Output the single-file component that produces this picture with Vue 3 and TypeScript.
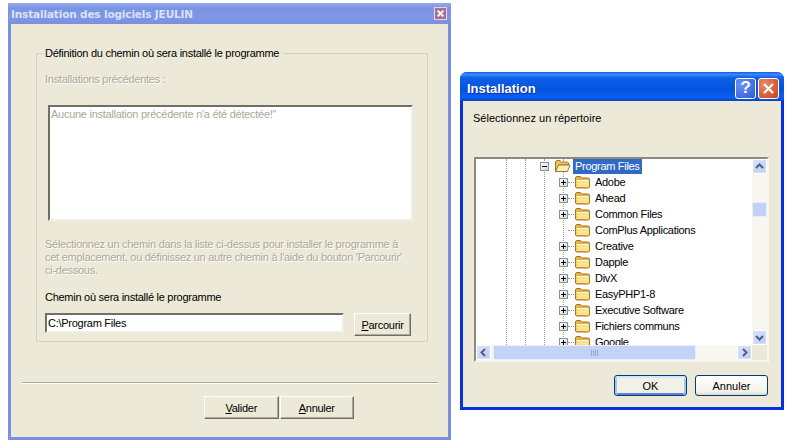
<script setup lang="ts">
interface Row { name: string; plus: boolean }
const rows: Row[] = [
  { name: 'Adobe', plus: true },
  { name: 'Ahead', plus: true },
  { name: 'Common Files', plus: true },
  { name: 'ComPlus Applications', plus: false },
  { name: 'Creative', plus: true },
  { name: 'Dapple', plus: true },
  { name: 'DivX', plus: true },
  { name: 'EasyPHP1-8', plus: true },
  { name: 'Executive Software', plus: true },
  { name: 'Fichiers communs', plus: true },
  { name: 'Google', plus: true },
]
</script>

<template>
  <div class="desk">
    <section class="win left">
      <header class="ltitle">
        <span>Installation des logiciels JEULIN</span>
        <span class="lclose">
          <svg width="9" height="9" viewBox="0 0 11 11"><path d="M2 2l7 7M9 2l-7 7" stroke="#fff" stroke-width="2.4" fill="none"/></svg>
        </span>
      </header>
      <div class="lbody">
        <fieldset class="group">
          <legend>Définition du chemin où sera installé le programme</legend>
          <div class="dim first">Installations précédentes :</div>
          <div class="area">Aucune installation précédente n'a été détectée!''</div>
          <p class="dim para">Sélectionnez un chemin dans la liste ci-dessus pour installer le programme à<br>cet emplacement, ou définissez un autre chemin à l'aide du bouton 'Parcourir'<br>ci-dessous.</p>
          <div class="pathlabel">Chemin où sera installé le programme</div>
          <div class="pathrow">
            <div class="field">C:\Program Files</div>
            <button class="cbtn browse"><u>P</u>arcourir</button>
          </div>
        </fieldset>
        <div class="sep"></div>
        <div class="lfoot">
          <button class="cbtn wide"><u>V</u>alider</button>
          <button class="cbtn wide"><u>A</u>nnuler</button>
        </div>
      </div>
    </section>

    <section class="win right">
      <header class="rtitle">
        <span class="rname">Installation</span>
        <span class="caps">
          <span class="cap help">?</span>
          <span class="cap close">
            <svg width="13" height="13" viewBox="0 0 13 13"><path d="M2 2l9 9M11 2l-9 9" stroke="#fff" stroke-width="2.2" fill="none"/></svg>
          </span>
        </span>
      </header>
      <div class="rbody">
        <div class="prompt">Sélectionnez un répertoire</div>
        <div class="treebox">
          <div class="tree">
            <i class="guide g1"></i><i class="guide g2"></i><i class="guide g3"></i><i class="guide g4"></i>
            <div class="row root">
              <span class="exp minus"></span>
              <svg class="folder" width="17" height="14" viewBox="0 0 17 14">
                <path d="M1.500 12.500V2.500l1-1h3.500l1.500 1.500h6l1 1V6H5z" fill="#eec25a" stroke="#a5762a"/>
                <path d="M1.500 12.500L4.500 6H16l-2.500 6.500z" fill="#fdeeb4" stroke="#a5762a"/>
              </svg>
              <span class="sel">Program Files</span>
            </div>
            <div v-for="r in rows" :key="r.name" class="row child">
              <span class="exp" :class="{ none: !r.plus }"></span>
              <span class="dash"></span>
              <svg class="folder" width="17" height="14" viewBox="0 0 17 14">
                <path d="M1.500 12V2.500l1-1h4l1.500 1.500h6.500l1 1V12l-1 1h-12z" fill="#e6b445" stroke="#a5762a"/>
                <path d="M2.500 12V6q0-1 1-1h10.500q1 0 1 1v6z" fill="#fce28a"/>
                <path d="M2.500 5.500h12" stroke="#fff6cf"/>
              </svg>
              <span class="nm">{{ r.name }}</span>
            </div>
          </div>
          <div class="vbar">
            <span class="sb"><svg width="9" height="7" viewBox="0 0 9 7"><path d="M1 5l3.500-3.500L8 5" stroke="#4d6185" stroke-width="2" fill="none"/></svg></span>
            <span class="vthumb"></span>
            <span class="vfill"></span>
            <span class="sb"><svg width="9" height="7" viewBox="0 0 9 7"><path d="M1 2l3.500 3.500L8 2" stroke="#4d6185" stroke-width="2" fill="none"/></svg></span>
          </div>
          <div class="hbar">
            <span class="sb"><svg width="7" height="9" viewBox="0 0 7 9"><path d="M5 1L1.500 4.500 5 8" stroke="#4d6185" stroke-width="2" fill="none"/></svg></span>
            <span class="hthumb"><i></i><i></i><i></i><i></i></span>
            <span class="hfill"></span>
            <span class="sb"><svg width="7" height="9" viewBox="0 0 7 9"><path d="M2 1l3.500 3.500L2 8" stroke="#4d6185" stroke-width="2" fill="none"/></svg></span>
          </div>
          <div class="corner"></div>
        </div>
        <div class="rfoot">
          <button class="xbtn def">OK</button>
          <button class="xbtn">Annuler</button>
        </div>
      </div>
    </section>
  </div>
</template>

<style>
html, body { margin: 0; background: #fff; overflow: hidden; }
</style>

<style scoped>
.desk { position: relative; width: 786px; height: 444px; background: #fff; font: 11px/14px "Liberation Sans", Arial, sans-serif; letter-spacing: -0.27px; color: #000; overflow: hidden; }
.win { position: absolute; box-sizing: border-box; display: flex; flex-direction: column; }
.left { left: 8px; top: 3px; width: 443px; height: 437px; border: 3px solid #7b8fe0; border-top: 0; border-radius: 3px 3px 0 0; }
.ltitle { height: 21px; margin: 0 -3px; padding: 0 3px; display: flex; align-items: center; justify-content: space-between; background: linear-gradient(180deg, #93a8ec 0, #7b93e4 25%, #7e97e6 70%, #7a8fdf 100%); color: #d8e4f6; font: bold 10.500px "DejaVu Sans", sans-serif; letter-spacing: -0.15px; }
.lclose { width: 13px; height: 13px; margin-right: 1px; background: #a9708f; border: 1px solid #d8d8ee; box-sizing: border-box; display: flex; align-items: center; justify-content: center; }
.lbody { flex: 1; background: #ece9d8; }
.group { box-sizing: border-box; margin: 22px 0 0 25px; width: 392px; height: 296px; border: 1px solid #d0d0bf; border-radius: 2px; padding: 0 0 0 8px; min-width: 0; }
.group legend { padding: 0 4px 0 2px; margin-left: -2px; line-height: 14px; }
.dim { color: #aca899; text-shadow: 1px 1px 0 #fff; }
.first { margin-top: 12px; }
.area { box-sizing: border-box; margin: 19px 0 0 3px; width: 365px; height: 116px; background: #fff; border: 2px solid; border-color: #716f64 #f1efe2 #f1efe2 #716f64; padding: 0 1px; color: #aca899; }
.para { margin: 17px 0 0; line-height: 13px; white-space: nowrap; }
.pathlabel { margin-top: 13px; }
.pathrow { display: flex; align-items: flex-start; gap: 10px; margin-top: 9px; }
.field { box-sizing: border-box; width: 299px; height: 20px; background: #fff; border: 2px solid; border-color: #716f64 #f1efe2 #f1efe2 #716f64; padding: 1px; line-height: 15px; }
.cbtn { box-sizing: border-box; padding: 0; background: #ece9d8; border: 1px solid; border-color: #fff #716f64 #716f64 #fff; box-shadow: inset -1px -1px 0 #aca899; font: inherit; letter-spacing: inherit; color: #000; }
.browse { width: 57px; height: 23px; }
.sep { margin: 40px 10px 0 11px; height: 1px; background: #aca899; border-bottom: 1px solid #fff; }
.lfoot { display: flex; gap: 1px; margin: 12px 0 0 193px; }
.wide { width: 74.500px; height: 23px; }

.right { left: 460px; top: 72px; width: 324px; height: 338px; border: 3px solid #0831d9; border-top: 0; border-radius: 7px 7px 0 0; }
.rtitle { box-sizing: border-box; height: 29px; margin: 0 -3px; padding: 3px 5px 0 7px; border-radius: 7px 7px 0 0; display: flex; align-items: center; justify-content: space-between; background: linear-gradient(180deg, #0a5de0 0, #3c8cf7 8%, #0d5fe6 20%, #0553df 60%, #0a5ff0 88%, #0641c4 100%); color: #fff; }
.rname { font: bold 13px "Liberation Sans", sans-serif; text-shadow: 1px 1px 0 #0a2fa8; letter-spacing: 0; }
.caps { display: flex; gap: 2px; }
.cap { box-sizing: border-box; width: 21px; height: 21px; border: 1px solid #fff; border-radius: 3px; display: flex; align-items: center; justify-content: center; color: #fff; }
.help { background: radial-gradient(circle at 30% 30%, #6b93f0, #2e5ad8); font: bold 17px "Liberation Sans", sans-serif; }
.close { background: radial-gradient(circle at 30% 30%, #e98a68, #c9401e); }
.rbody { flex: 1; background: #ece9d8; display: flex; flex-direction: column; }
.prompt { margin: 10px 0 0 10px; letter-spacing: 0; }
.treebox { box-sizing: border-box; margin: 32px 0 0 11px; width: 295px; height: 205px; border: 2px solid; border-color: #8c8a7e #f8f7f0 #f8f7f0 #8c8a7e; display: grid; grid-template-columns: 1fr 15px; grid-template-rows: 1fr 15px; background: #fff; }
.tree { position: relative; overflow: hidden; letter-spacing: -0.3px; }
.row { height: 16px; display: flex; align-items: center; position: relative; white-space: nowrap; }
.root { margin-left: 64px; margin-top: -1px; }
.child { margin-left: 83px; }
.exp { box-sizing: border-box; width: 9px; height: 9px; flex: none; border: 1px solid #7f93a9; background: linear-gradient(135deg, #fff, #d8d4c8); position: relative; }
.exp::before { content: ""; position: absolute; left: 1px; right: 1px; top: 3px; height: 1px; background: #000; }
.exp::after { content: ""; position: absolute; top: 1px; bottom: 1px; left: 3px; width: 1px; background: #000; }
.minus::after { display: none; }
.exp.none { border: 0; background: none; }
.exp.none::before, .exp.none::after { display: none; }
.dash { width: 6px; flex: none; border-top: 1px dotted #a09c8c; }
.folder { flex: none; }
.root .folder { margin-left: 5px; margin-right: 2px; }
.child .folder { margin-right: 4px; }
.sel { background: #316ac5; color: #fff; padding: 0 2px; line-height: 16px; }
.nm { line-height: 16px; }
.guide { position: absolute; top: 0; bottom: 0; width: 0; border-left: 1px dotted #a09c8c; }
.g1 { left: 30px; }
.g2 { left: 49px; }
.g3 { left: 68px; }
.g4 { left: 87px; }
.vbar { background: #f7f6f0; display: flex; flex-direction: column; }
.hbar { background: #f7f6f0; display: flex; }
.corner { background: #ece9d8; }
.sb { box-sizing: border-box; flex: none; width: 15px; height: 15px; background: linear-gradient(135deg, #dbe6fb, #b8cbf3); border: 1px solid #fff; outline: 1px solid #d4e0f6; outline-offset: -2px; border-radius: 2px; display: flex; align-items: center; justify-content: center; }
.vthumb { box-sizing: border-box; margin-top: 28px; height: 15px; background: #c2d2f7; border: 1px solid #e8eefc; border-radius: 2px; }
.vfill { flex: 1; }
.hthumb { box-sizing: border-box; margin-left: 2px; width: 203px; background: #c2d3f6; border: 1px solid #e8eefc; border-radius: 2px; display: flex; gap: 1px; align-items: center; justify-content: center; }
.hthumb i { width: 1px; height: 6px; background: #8ea8e0; }
.hfill { flex: 1; }
.rfoot { display: flex; gap: 8px; margin: 13px 0 0 151px; }
.xbtn { box-sizing: border-box; width: 73px; height: 21px; padding: 0; border: 1px solid #003c74; border-radius: 3px; background: linear-gradient(180deg, #fff, #f2f1e8 85%, #dcd8c8); font: inherit; letter-spacing: 0; color: #000; }
.def { background: #f2f1e8; box-shadow: inset 0 2px 0 #cee7ff, inset 2px 0 0 #a5c4f0, inset -2px 0 0 #a5c4f0, inset 0 -2px 0 #5f80e0; }
</style>
